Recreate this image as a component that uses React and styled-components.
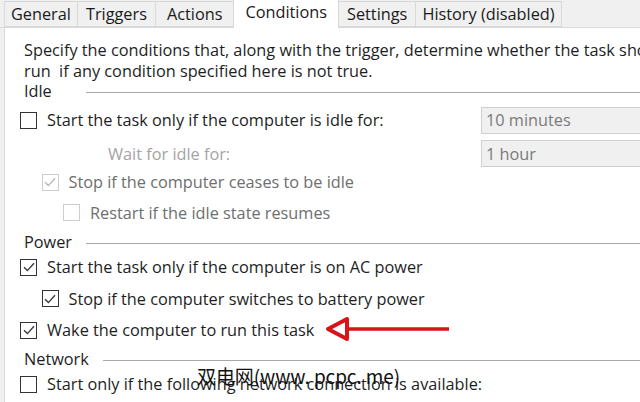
import React from 'react'
import styled, { createGlobalStyle } from 'styled-components'

const GlobalStyle = createGlobalStyle`
  html, body {
    margin: 0;
    padding: 0;
    background: #ffffff;
    overflow: hidden;
  }
  body {
    font-family: "Open Sans", "Noto Sans", sans-serif;
    color: #1e1e1e;
  }
`

const tabs = [
  { name: 'General', pad: 6 },
  { name: 'Triggers', pad: 8 },
  { name: 'Actions', pad: 11 },
  { name: 'Conditions', pad: 11 },
  { name: 'Settings', pad: 8 },
  { name: 'History (disabled)', pad: 6 },
]

const App = () => {
  return (
    <Window>
      <GlobalStyle />
      <TabStrip>
        {tabs.map((t) => (
          <Tab key={t.name} pad={t.pad} active={t.name === 'Conditions'}>{t.name}</Tab>
        ))}
      </TabStrip>
      <Panel>
        <Intro>
          Specify the conditions that, along with the trigger, determine whether the task should
          <br />
          run&nbsp; if any condition specified here is not true.
        </Intro>

        <Group label='Idle' />
        <Row h={40}>
          <CheckLine>
            <Check />
            <Label>Start the task only if the computer is idle for:</Label>
          </CheckLine>
          <Field>10 minutes</Field>
        </Row>
        <Row h={27}>
          <SubLabel>Wait for idle for:</SubLabel>
          <Field>1 hour</Field>
        </Row>
        <CheckLine indent={1} h={30}>
          <Check checked disabled />
          <Label disabled>Stop if the computer ceases to be idle</Label>
        </CheckLine>
        <CheckLine indent={2} h={31}>
          <Check disabled />
          <Label disabled>Restart if the idle state resumes</Label>
        </CheckLine>

        <Group label='Power' top={5} />
        <CheckLine h={32}>
          <Check checked />
          <Label>Start the task only if the computer is on AC power</Label>
        </CheckLine>
        <CheckLine indent={1} h={31}>
          <Check checked />
          <Label>Stop if the computer switches to battery power</Label>
        </CheckLine>
        <CheckLine h={32}>
          <Check checked />
          <Label>Wake the computer to run this task</Label>
        </CheckLine>

        <Group label='Network' top={4} />
        <CheckLine h={32}>
          <Check />
          <Label>Start only if the following network connection is available:</Label>
        </CheckLine>
      </Panel>
      <Arrow />
      <Watermark>双电网(www. pcpc. me)</Watermark>
    </Window>
  )
}

const Group = ({ label, top }) => (
  <GroupHead top={top}>
    <GroupTitle>{label}</GroupTitle>
    <GroupRule />
  </GroupHead>
)

const Check = ({ checked, disabled }) => (
  <Box disabled={disabled}>
    {checked && (
      <svg width='14' height='14' viewBox='0 0 14 14'>
        <path
          d='M2 7.2 L5.4 10.6 L12 3.2'
          fill='none'
          stroke={disabled ? '#b8b8b8' : '#3a3a3a'}
          strokeWidth='1.4'
        />
      </svg>
    )}
  </Box>
)

const Arrow = () => (
  <ArrowWrap>
    <svg width='126' height='26' viewBox='0 0 126 26'>
      <line x1='22' y1='13' x2='124' y2='13' stroke='#d8141a' strokeWidth='3.5' />
      <polygon
        points='3,13 22,3 22,23'
        fill='#fff'
        stroke='#d8141a'
        strokeWidth='4'
        strokeLinejoin='round'
      />
    </svg>
  </ArrowWrap>
)

export default App

const Window = styled.div`
  position: relative;
  width: 640px;
  height: 402px;
  overflow: hidden;
  background: #f0f0f0;
  font-size: 16.3px;
`
const TabStrip = styled.div`
  display: flex;
  align-items: flex-end;
  height: 28px;
  padding-left: 5px;
  box-sizing: border-box;
  border-bottom: 1px solid #d9d9d9;
`
const Tab = styled.div`
  height: ${(p) => (p.active ? '29px' : '26px')};
  margin-bottom: ${(p) => (p.active ? '-1px' : '0')};
  padding: 0 ${(p) => p.pad}px;
  box-sizing: border-box;
  display: flex;
  align-items: center;
  color: #1a1a1a;
  background: ${(p) => (p.active ? '#ffffff' : '#f0f0f0')};
  border: 1px solid #d9d9d9;
  border-bottom: ${(p) => (p.active ? 'none' : '1px solid #d9d9d9')};
  margin-left: -1px;
  padding-bottom: ${(p) => (p.active ? '4px' : '0')};
`
const Panel = styled.div`
  background: #ffffff;
  margin-left: 4px;
  height: 374px;
  border-left: 1px solid #d9d9d9;
  padding: 12px 0 0 19px;
  box-sizing: border-box;
`
const Intro = styled.div`
  line-height: 21px;
  white-space: nowrap;
`
const GroupHead = styled.div`
  display: flex;
  align-items: center;
  height: 18px;
  margin-top: ${(p) => p.top || 0}px;
`
const GroupTitle = styled.span`
  line-height: 18px;
  color: #1e1e1e;
  padding-right: 14px;
  min-width: 48px;
`
const GroupRule = styled.div`
  flex: 1;
  height: 1px;
  background: #a9a9a9;
  margin-top: 3px;
  box-shadow: 0 1px 0 #ffffff;
`
const Row = styled.div`
  display: flex;
  align-items: center;
  justify-content: space-between;
  height: ${(p) => p.h}px;
`
const CheckLine = styled.div`
  display: flex;
  align-items: center;
  gap: 10px;
  height: ${(p) => p.h || 34}px;
  padding-left: ${(p) => (p.indent || 0) * 21.5}px;
  margin-left: -4px;
`
const Box = styled.span`
  width: 15px;
  height: 15px;
  flex: none;
  border: 1px solid ${(p) => (p.disabled ? '#cdcdcd' : '#333333')};
  background: #ffffff;
  display: flex;
  align-items: center;
  justify-content: center;
`
const Label = styled.span`
  white-space: nowrap;
  color: ${(p) => (p.disabled ? '#6e6e6e' : '#1e1e1e')};
`
const SubLabel = styled.span`
  padding-left: 84px;
  color: #a4a4a4;
`
const Field = styled.div`
  width: 159px;
  height: 27px;
  box-sizing: border-box;
  padding-left: 4px;
  display: flex;
  align-items: center;
  background: #f0f0f0;
  border: 1px solid #d0d0d0;
  border-right: none;
  color: #7a7a7a;
`
const ArrowWrap = styled.div`
  position: absolute;
  left: 325px;
  top: 316px;
  display: flex;
`
const Watermark = styled.div`
  position: absolute;
  left: 197px;
  top: 362px;
  font-family: "Noto Sans CJK SC", "Open Sans", sans-serif;
  font-size: 19px;
  color: #111111;
  white-space: nowrap;
  letter-spacing: -0.1px;
`
